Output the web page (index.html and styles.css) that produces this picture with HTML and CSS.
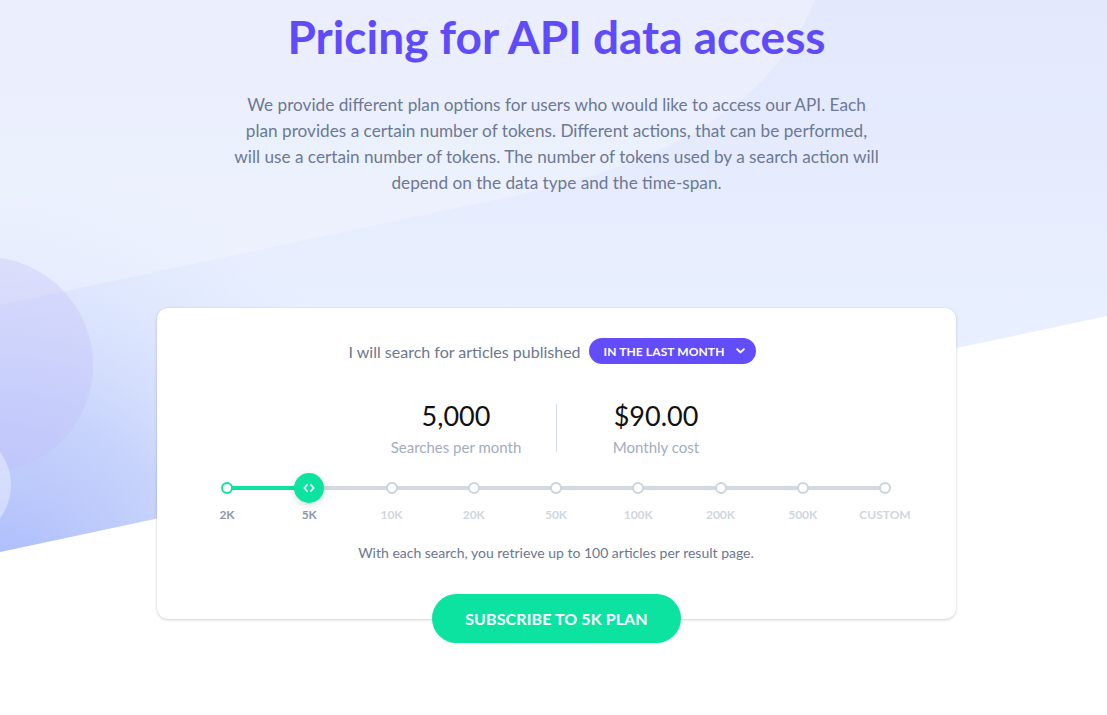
FILE: index.html
```html
<!DOCTYPE html>
<html lang="en">
<head>
<meta charset="utf-8">
<title>Pricing for API data access</title>
<link rel="stylesheet" href="styles.css">
</head>
<body>
<div class="hero">
  <svg class="bg" width="1107" height="715" viewBox="0 0 1107 715" aria-hidden="true">
    <defs>
      <linearGradient id="gTop" x1="0" y1="0" x2="0" y2="560" gradientUnits="userSpaceOnUse">
        <stop offset="0" stop-color="#e3e8fd"/>
        <stop offset="0.55" stop-color="#e8effe"/>
        <stop offset="1" stop-color="#eaf2fe"/>
      </linearGradient>
      <radialGradient id="gBlue" cx="0" cy="600" r="430" gradientUnits="userSpaceOnUse">
        <stop offset="0" stop-color="#a7b7fb" stop-opacity="1"/>
        <stop offset="0.45" stop-color="#bccafb" stop-opacity="0.75"/>
        <stop offset="1" stop-color="#d8e3fd" stop-opacity="0"/>
      </radialGradient>
    </defs>
    <path d="M0,0 L1107,0 L1107,316 L0,552 Z" fill="url(#gTop)"/>
    <path d="M0,0 L1107,0 L1107,316 L0,552 Z" fill="url(#gBlue)"/>
    <path d="M0,0 L815,0 C770,110 660,170 470,205 L0,305 Z" fill="#ffffff" fill-opacity="0.26"/>
    <circle cx="-15" cy="365" r="108" fill="#c3bdf9" fill-opacity="0.33"/>
    <circle cx="-45" cy="485" r="56" fill="#ffffff" fill-opacity="0.38"/>
  </svg>

  <main class="content">
    <h1 class="title">Pricing for API data access</h1>
    <p class="lead">We provide different plan options for users who would like to access our API. Each plan provides a certain number of tokens. Different actions, that can be performed, will use a certain number of tokens. The number of tokens used by a search action will depend on the data type and the time-span.</p>

    <section class="card">
      <div class="period">
        <span class="period-text">I will search for articles published</span>
        <button class="pill" type="button">IN THE LAST MONTH
          <svg class="chev" width="9" height="6" viewBox="0 0 9 6"><path d="M1.2 1.2 L4.5 4.4 L7.8 1.2" fill="none" stroke="#fff" stroke-width="1.9" stroke-linecap="round" stroke-linejoin="round"/></svg>
        </button>
      </div>

      <div class="stats">
        <div class="stat">
          <div class="stat-value">5,000</div>
          <div class="stat-label">Searches per month</div>
        </div>
        <div class="divider"></div>
        <div class="stat">
          <div class="stat-value">$90.00</div>
          <div class="stat-label">Monthly cost</div>
        </div>
      </div>

      <div class="slider">
        <div class="track"><div class="track-fill" style="width: 12.5%"></div></div>
        <div class="ticks">
          <div class="tick"><span class="dot dot-on"></span><span class="tick-label on">2K</span></div>
          <div class="tick"><span class="handle"><svg width="12" height="8" viewBox="0 0 12 8"><path d="M4 1 L1.3 4 L4 7 M8 1 L10.7 4 L8 7" fill="none" stroke="#fff" stroke-width="1.7" stroke-linecap="round" stroke-linejoin="round"/></svg></span><span class="tick-label on">5K</span></div>
          <div class="tick"><span class="dot"></span><span class="tick-label">10K</span></div>
          <div class="tick"><span class="dot"></span><span class="tick-label">20K</span></div>
          <div class="tick"><span class="dot"></span><span class="tick-label">50K</span></div>
          <div class="tick"><span class="dot"></span><span class="tick-label">100K</span></div>
          <div class="tick"><span class="dot"></span><span class="tick-label">200K</span></div>
          <div class="tick"><span class="dot"></span><span class="tick-label">500K</span></div>
          <div class="tick"><span class="dot"></span><span class="tick-label">CUSTOM</span></div>
        </div>
      </div>

      <p class="note">With each search, you retrieve up to 100 articles per result page.</p>
    </section>

    <button class="subscribe" type="button">SUBSCRIBE TO 5K PLAN</button>
  </main>
</div>
</body>
</html>
```

FILE: styles.css
```css
* { box-sizing: border-box; }

html, body {
  margin: 0;
  padding: 0;
  background: #ffffff;
  font-family: Lato, "Open Sans", "Liberation Sans", sans-serif;
}

.hero {
  position: relative;
  width: 1107px;
  height: 715px;
  overflow: hidden;
  background: #ffffff;
}

.bg {
  position: absolute;
  left: 0;
  top: 0;
}

.content {
  position: relative;
  display: flex;
  flex-direction: column;
  align-items: center;
  padding: 9px 0 0 6px;
}

.title {
  margin: 0;
  font-size: 46px;
  line-height: 56px;
  font-weight: 700;
  color: #604bfa;
  letter-spacing: 0;
}

.lead {
  margin: 27px 0 0;
  width: 648px;
  text-align: center;
  font-size: 17.2px;
  line-height: 26px;
  color: #6c7894;
}

.card {
  margin-top: 112px;
  width: 799px;
  background: #ffffff;
  border-radius: 11px;
  box-shadow: 0 1px 3px rgba(40, 50, 80, 0.22), 0 0 1px rgba(40, 50, 80, 0.12);
  padding: 30px 56px 56px 55px;
  display: flex;
  flex-direction: column;
  align-items: center;
}

.period {
  display: flex;
  align-items: center;
  gap: 8px;
  height: 26px;
  margin-right: 8px;
}

.period-text {
  font-size: 16px;
  color: #6b7791;
}

.pill {
  display: flex;
  align-items: center;
  gap: 11px;
  height: 26px;
  padding: 0 11px 0 15px;
  border: 0;
  border-radius: 13px;
  background: #634cfa;
  color: #ffffff;
  font-family: inherit;
  font-size: 12px;
  font-weight: 700;
  letter-spacing: 0.1px;
}

.chev { display: block; }

.stats {
  display: flex;
  align-items: center;
  margin-top: 35px;
}

.stat {
  width: 199px;
  text-align: center;
}

.stat-value {
  font-size: 27px;
  line-height: 34px;
  color: #111111;
}

.stat-label {
  margin-top: 4px;
  font-size: 15px;
  line-height: 20px;
  color: #a2adbf;
}

.divider {
  width: 1px;
  height: 48px;
  background: #d5dbe4;
}

.slider {
  position: relative;
  align-self: stretch;
  margin-top: 16px;
}

.track {
  position: absolute;
  left: 15px;
  right: 15px;
  top: 13px;
  height: 4px;
  background: #d2d9e2;
  border-radius: 2px;
}

.track-fill {
  height: 4px;
  background: #0ce3a1;
  border-radius: 2px;
}

.ticks {
  position: relative;
  display: flex;
  justify-content: space-between;
}

.tick {
  width: 30px;
  display: flex;
  flex-direction: column;
  align-items: center;
}

.dot {
  width: 12px;
  height: 12px;
  margin: 9px 0;
  border-radius: 50%;
  background: #ffffff;
  border: 2.5px solid #cbd3de;
}

.dot-on { border-color: #0ce3a1; }

.handle {
  width: 30px;
  height: 30px;
  border-radius: 50%;
  background: #0ce3a1;
  display: flex;
  align-items: center;
  justify-content: center;
  box-shadow: 0 2px 6px rgba(0, 60, 40, 0.18);
}

.handle svg { display: block; }

.tick-label {
  margin-top: 4px;
  font-size: 12px;
  line-height: 15px;
  font-weight: 700;
  white-space: nowrap;
  color: #cfd6e0;
}

.tick-label.on { color: #8b97ad; }

.note {
  margin: 21px 0 0;
  font-size: 14px;
  line-height: 20px;
  color: #6b7791;
}

.subscribe {
  margin-top: -25px;
  width: 249px;
  height: 49px;
  border: 0;
  border-radius: 25px;
  background: #0ce3a1;
  color: #ffffff;
  font-family: inherit;
  font-size: 16px;
  font-weight: 700;
  letter-spacing: 0.1px;
  position: relative;
}
```
